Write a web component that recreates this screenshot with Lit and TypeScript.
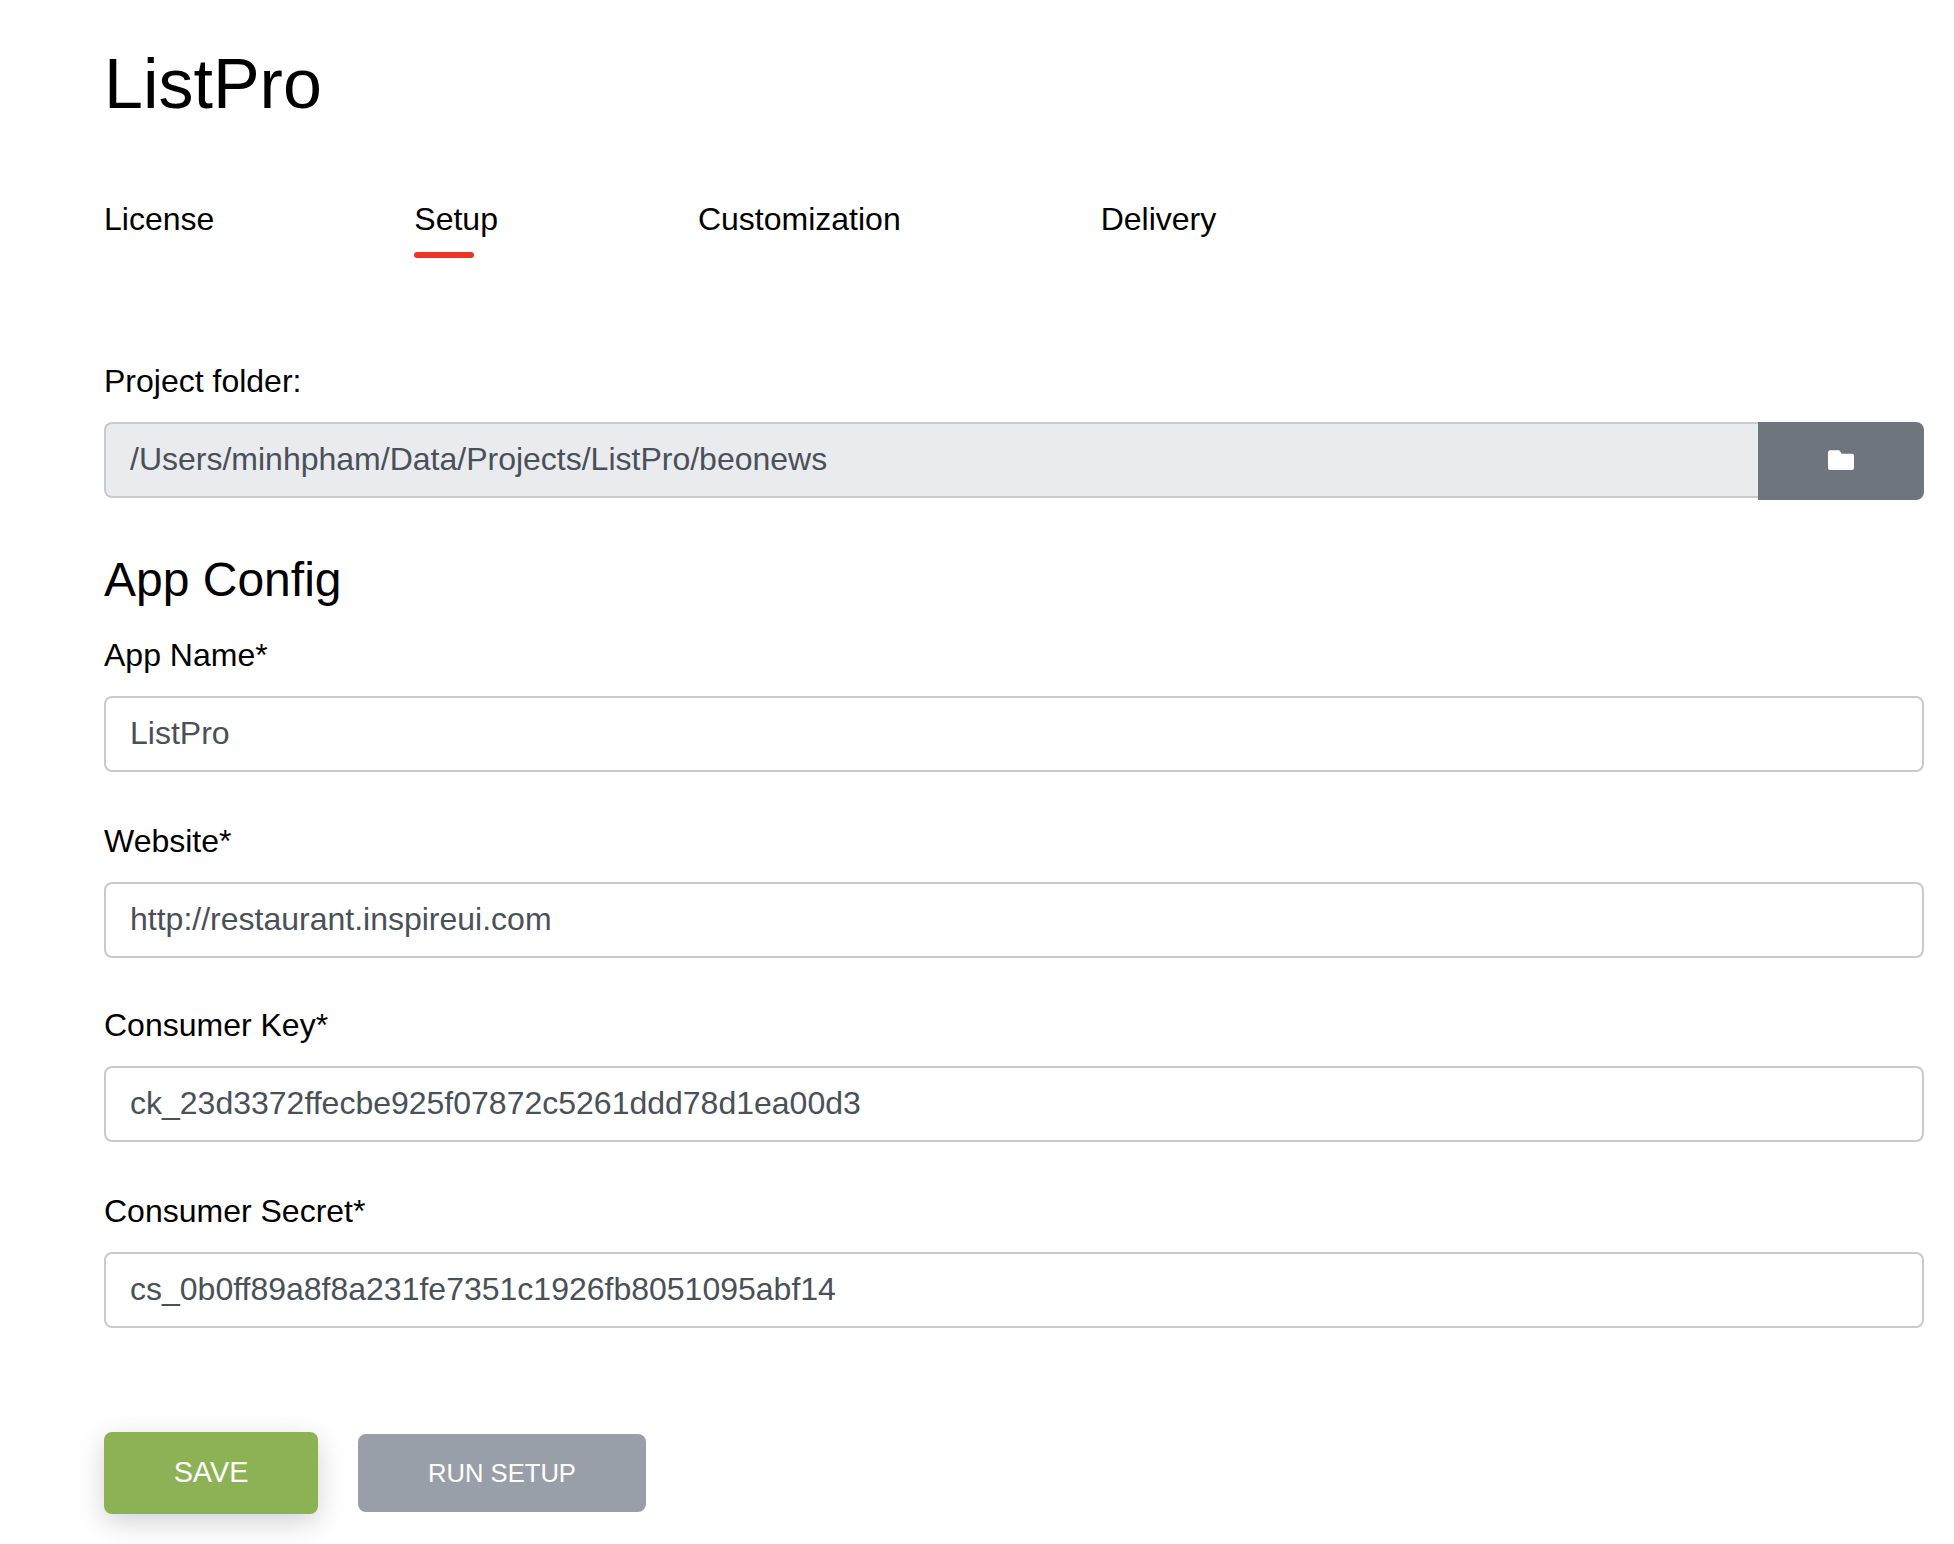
import { LitElement, html, css } from "lit";
import { customElement, property, state } from "lit/decorators.js";
import { classMap } from "lit/directives/class-map.js";

@customElement("setup-field")
class SetupField extends LitElement {
  @property() label = "";
  @property() value = "";
  @property({ type: Boolean }) browse = false;

  static styles = css`
    :host {
      display: block;
    }
    .label {
      display: block;
      line-height: 48px;
      margin-bottom: 17px;
    }
    .group {
      display: flex;
      align-items: flex-start;
    }
    .control {
      box-sizing: border-box;
      flex: 1;
      min-width: 0;
      height: 76px;
      margin: 0;
      padding: 0 24px 2px;
      border: 2px solid #cacaca;
      border-radius: 8px;
      background: #fff;
      color: #495057;
      font: inherit;
      outline: none;
    }
    .locked {
      background: #eaebef;
      border-right: 0;
      border-radius: 8px 0 0 8px;
    }
    .browse {
      display: flex;
      align-items: center;
      justify-content: center;
      width: 166px;
      height: 78px;
      padding: 0;
      border: 0;
      border-radius: 0 8px 8px 0;
      background: #6e757c;
      color: #fff;
    }
    .folder {
      display: block;
      width: 26px;
      height: 20px;
      margin-top: -2px;
    }
  `;

  render() {
    return html`
      <label class="label" for="control">${this.label}</label>
      <div class="group">
        <input
          id="control"
          class=${classMap({ control: true, locked: this.browse })}
          type="text"
          spellcheck="false"
          .value=${this.value}
          ?readonly=${this.browse}
        />
        ${this.browse
          ? html`<button class="browse" aria-label="Browse">
              <svg class="folder" viewBox="0 0 26 20" fill="currentColor">
                <path
                  d="M2 .2H10.4Q11.4 .2 12 1.1L13.6 3.7H24Q26 3.7 26 5.7V18Q26 20 24 20H2Q0 20 0 18V2.2Q0 .2 2 .2Z"
                />
              </svg>
            </button>`
          : null}
      </div>
    `;
  }
}

@customElement("app-root")
class AppRoot extends LitElement {
  @state() private active = "Setup";

  static styles = css`
    :host {
      display: block;
      box-sizing: border-box;
      min-height: 1544px;
      padding: 42px 30px 0 104px;
      background: #fff;
      color: #000;
      font-family: "Liberation Sans", Arial, sans-serif;
      font-size: 32px;
      font-variant-ligatures: none;
    }
    .title {
      margin: 0 0 69px;
      font-size: 70px;
      font-weight: 400;
      line-height: 84px;
    }
    .tabs {
      display: flex;
      gap: 200px;
      height: 63px;
      margin-bottom: 99px;
    }
    .tab {
      line-height: 48px;
      cursor: pointer;
    }
    .active::after {
      content: "";
      display: block;
      width: 60px;
      height: 6px;
      margin-top: 9px;
      border-radius: 3px;
      background: #eb3527;
    }
    .section {
      margin: 51px 0 22px;
      font-size: 48px;
      font-weight: 400;
      line-height: 58px;
    }
    .fields {
      display: flex;
      flex-direction: column;
    }
    .website {
      margin-top: 45px;
    }
    .key {
      margin-top: 43px;
    }
    .secret {
      margin-top: 45px;
    }
    .actions {
      display: flex;
      align-items: center;
      gap: 40px;
      margin-top: 104px;
    }
    .button {
      padding: 0;
      border: 0;
      border-radius: 8px;
      color: #fff;
      font-family: inherit;
      text-transform: uppercase;
    }
    .save {
      width: 214px;
      height: 82px;
      padding-bottom: 1px;
      background: #8db255;
      font-size: 28.8px;
      box-shadow: 0 8px 28px rgba(0, 0, 0, 0.18);
    }
    .run {
      width: 288px;
      height: 78px;
      background: #999fa9;
      font-size: 25.6px;
    }
  `;

  render() {
    return html`
      <h1 class="title">ListPro</h1>
      <nav class="tabs">
        ${["License", "Setup", "Customization", "Delivery"].map(
          (name) => html`<div
            class=${classMap({ tab: true, active: name === this.active })}
            @click=${() => (this.active = name)}
          >
            ${name}
          </div>`
        )}
      </nav>
      <setup-field
        browse
        label="Project folder:"
        value="/Users/minhpham/Data/Projects/ListPro/beonews"
      ></setup-field>
      <h2 class="section">App Config</h2>
      <div class="fields">
        <setup-field label="App Name*" value="ListPro"></setup-field>
        <setup-field class="website" label="Website*" value="http://restaurant.inspireui.com"></setup-field>
        <setup-field
          class="key"
          label="Consumer Key*"
          value="ck_23d3372ffecbe925f07872c5261ddd78d1ea00d3"
        ></setup-field>
        <setup-field
          class="secret"
          label="Consumer Secret*"
          value="cs_0b0ff89a8f8a231fe7351c1926fb8051095abf14"
        ></setup-field>
      </div>
      <div class="actions">
        <button class="button save">Save</button>
        <button class="button run">Run setup</button>
      </div>
    `;
  }
}
